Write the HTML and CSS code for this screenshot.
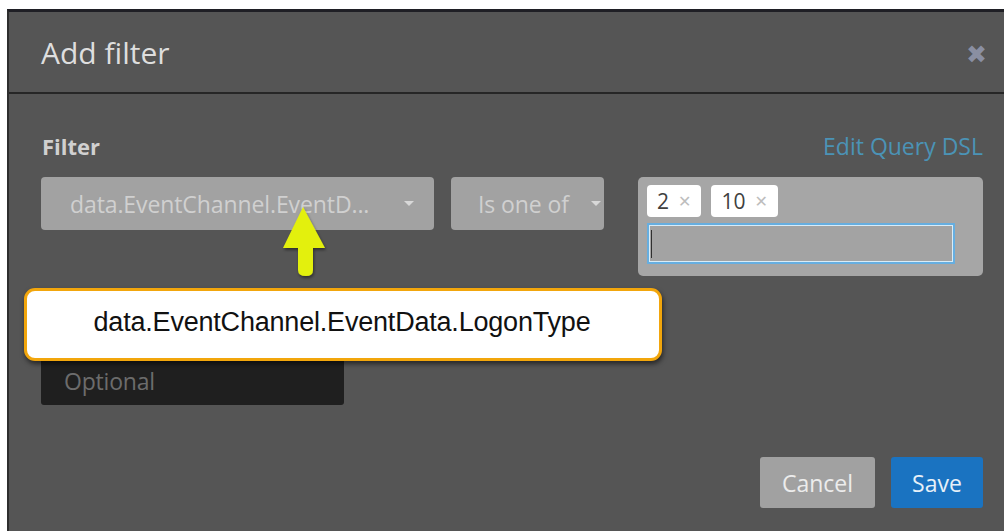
FILE: index.html
```html
<!DOCTYPE html>
<html lang="en">
<head>
<meta charset="utf-8">
<title>Add filter</title>
<link rel="stylesheet" href="styles.css">
</head>
<body>
<div class="modal">
  <div class="modal-header">
    <h1 class="modal-title">Add filter</h1>
    <span class="modal-close">&#x2716;</span>
  </div>
  <div class="modal-body">
    <div class="label-row">
      <span class="field-label">Filter</span>
      <a class="dsl-link">Edit Query DSL</a>
    </div>
    <div class="filter-row">
      <div class="select select-field">
        <span class="select-text">data.EventChannel.EventD...</span>
        <span class="caret"></span>
      </div>
      <div class="select select-op">
        <span class="select-text">Is one of</span>
        <span class="caret"></span>
      </div>
      <div class="values">
        <div class="tags">
          <span class="tag">2 <span class="tag-x">&#x2715;</span></span>
          <span class="tag">10 <span class="tag-x">&#x2715;</span></span>
        </div>
        <div class="value-input"><span class="cursor"></span></div>
      </div>
    </div>
    <div class="custom-label">
      <div class="optional-input">Optional</div>
    </div>
    <div class="actions">
      <button class="btn btn-cancel">Cancel</button>
      <button class="btn btn-save">Save</button>
    </div>
  </div>
</div>

<svg class="callout-arrow" width="52" height="76" viewBox="0 0 52 76">
  <defs>
    <filter id="arrowShadow" x="-30%" y="-20%" width="160%" height="150%">
      <feDropShadow dx="1" dy="2" stdDeviation="1.5" flood-color="#000" flood-opacity="0.45"/>
    </filter>
  </defs>
  <path d="M23 2 L45 43 L33 43 L33 65 Q33 71 26 71 Q18 71 18 65 L18 43 L3 43 Z" fill="#e3f00c" filter="url(#arrowShadow)"/>
</svg>
<div class="callout">data.EventChannel.EventData.LogonType</div>
</body>
</html>
```

FILE: styles.css
```css
html, body {
  margin: 0;
  padding: 0;
  background: #ffffff;
  height: 531px;
  overflow: hidden;
}

body {
  font-family: "Open Sans", "Noto Sans", sans-serif;
  position: relative;
}

.modal {
  margin: 9px 0 0 7px;
  height: 522px;
  background: #555555;
  border-top: 3px solid #1f1f25;
  border-left: 2px solid #2e2e2e;
  box-sizing: border-box;
}

.modal-header {
  height: 80px;
  display: flex;
  align-items: center;
  justify-content: space-between;
  padding: 0 17px 0 32px;
  border-bottom: 2px solid #262626;
}

.modal-title {
  margin: 0;
  font-weight: 400;
  font-size: 30px;
  color: #dedede;
  letter-spacing: 0;
}

.modal-close {
  font-size: 25px;
  line-height: 1;
  color: #8a8fa2;
  font-family: "DejaVu Sans", sans-serif;
  margin-top: 4px;
}

.modal-body {
  padding: 36px 21px 0 32px;
}

.label-row {
  display: flex;
  justify-content: space-between;
  align-items: baseline;
  height: 30px;
}

.field-label {
  font-weight: 700;
  font-size: 22px;
  color: #d0d0d0;
  margin-left: 1px;
}

.dsl-link {
  font-size: 23px;
  color: #4b93b6;
  letter-spacing: 0;
}

.filter-row {
  display: flex;
  align-items: flex-start;
  margin-top: 17px;
}

.select {
  height: 53px;
  background: #a2a2a2;
  border-radius: 4px;
  display: flex;
  align-items: center;
  justify-content: space-between;
  box-sizing: border-box;
  color: #d0d0d0;
  font-size: 23px;
  letter-spacing: -0.1px;
}

.select-field {
  width: 393px;
  padding: 0 20px 0 29px;
}

.select-op {
  width: 153px;
  margin-left: 17px;
  padding: 0 3px 0 27px;
}

.caret {
  width: 0;
  height: 0;
  border-left: 5px solid transparent;
  border-right: 5px solid transparent;
  border-top: 5px solid #d8d8d8;
}

.values {
  margin-left: 34px;
  flex: 1;
  height: 99px;
  background: #a6a6a6;
  border-radius: 5px;
  padding: 8px 28px 0 9px;
  box-sizing: border-box;
}

.tags {
  display: flex;
  gap: 10px;
}

.tag {
  background: #ffffff;
  border-radius: 4px;
  height: 32px;
  padding: 0 10px 0 10px;
  display: flex;
  align-items: center;
  gap: 9px;
  font-size: 21px;
  color: #404040;
  box-sizing: border-box;
}

.tag-x {
  font-size: 16px;
  color: #bdbdbd;
  font-family: "DejaVu Sans", sans-serif;
}

.value-input {
  margin-top: 6px;
  height: 41px;
  border: 2px solid #66aee0;
  box-shadow: 0 0 0 1px #d9ecf7 inset;
  background: #a3a3a3;
  box-sizing: border-box;
  display: flex;
  align-items: center;
  padding-left: 2px;
}

.cursor {
  width: 1px;
  height: 28px;
  background: #303030;
}

.custom-label {
  margin-top: 81px;
}

.optional-input {
  width: 303px;
  height: 48px;
  background: #1f1f1f;
  border-radius: 3px;
  color: #6c6c6c;
  font-size: 23px;
  letter-spacing: -0.2px;
  display: flex;
  align-items: center;
  padding-left: 23px;
  box-sizing: border-box;
}

.actions {
  display: flex;
  justify-content: flex-end;
  gap: 16px;
  margin-top: 52px;
}

.btn {
  height: 51px;
  border: none;
  border-radius: 3px;
  font-family: "Open Sans", "Noto Sans", sans-serif;
  font-size: 23px;
  padding: 0;
}

.btn-cancel {
  width: 115px;
  background: #a1a1a1;
  color: #ececec;
}

.btn-save {
  width: 92px;
  background: #1a73c1;
  color: #e6f0f8;
}

/* annotation callout over the form */
.callout {
  position: absolute;
  left: 24px;
  top: 288px;
  width: 638px;
  height: 73px;
  box-sizing: border-box;
  background: #ffffff;
  border: 3px solid #f2a60c;
  border-radius: 11px;
  box-shadow: 1px 3px 5px rgba(0, 0, 0, 0.55);
  display: flex;
  align-items: center;
  justify-content: center;
  font-family: "Liberation Sans", Arial, sans-serif;
  font-size: 27px;
  letter-spacing: -0.2px;
  color: #111111;
  padding: 0 2px 4px 0;
}

.callout-arrow {
  position: absolute;
  left: 280px;
  top: 205px;
}
```
